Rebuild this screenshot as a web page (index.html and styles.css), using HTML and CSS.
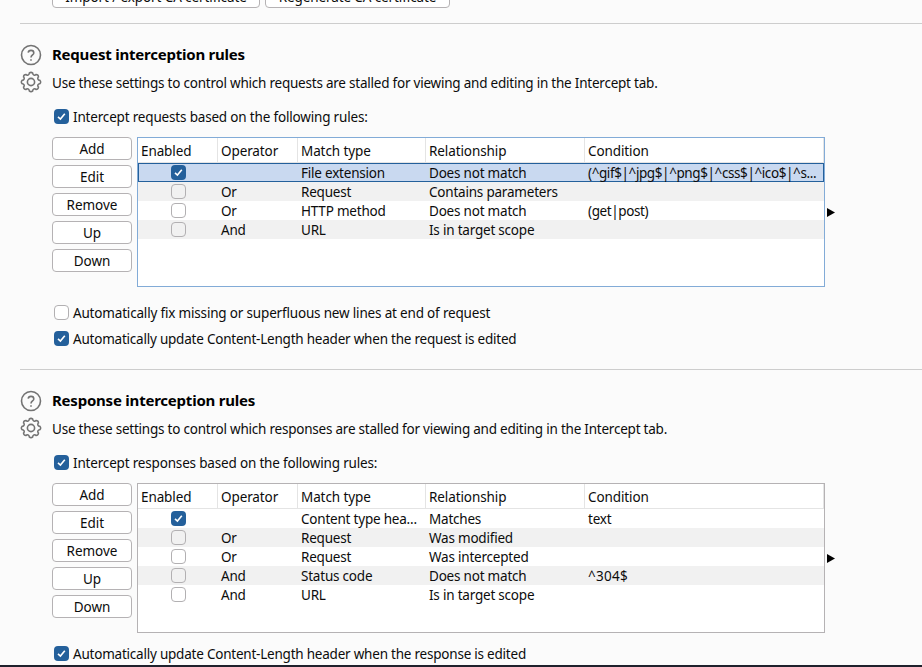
FILE: index.html
```
<!DOCTYPE html>
<html lang="en">
<head>
<meta charset="utf-8">
<title>Proxy settings</title>
<link rel="stylesheet" href="styles.css">
</head>
<body>
<svg class="defs" aria-hidden="true">
  <symbol id="help" viewBox="-11 -11 22 22"><circle r="9.5"/><path d="M-2.8-2.3C-2.5-5.4 2.8-5.4 2.8-2.1 2.8 0 0 0 0 2.6M0 4.3V5.8"/></symbol>
  <symbol id="gear" viewBox="-11 -11 22 22"><circle r="3.6"/><path transform="scale(.93)" d="M-1.9-9.5A2.8 2.8 0 0 1 1.9-9.5A1.95 1.95 0 0 0 5.37-8.06A2.8 2.8 0 0 1 8.06-5.37A1.95 1.95 0 0 0 9.5-1.9A2.8 2.8 0 0 1 9.5 1.9A1.95 1.95 0 0 0 8.06 5.37A2.8 2.8 0 0 1 5.37 8.06A1.95 1.95 0 0 0 1.9 9.5A2.8 2.8 0 0 1-1.9 9.5A1.95 1.95 0 0 0-5.37 8.06A2.8 2.8 0 0 1-8.06 5.37A1.95 1.95 0 0 0-9.5 1.9A2.8 2.8 0 0 1-9.5-1.9A1.95 1.95 0 0 0-8.06-5.37A2.8 2.8 0 0 1-5.37-8.06A1.95 1.95 0 0 0-1.9-9.5Z"/></symbol>
  <symbol id="tick" viewBox="0 0 15 15"><path d="M4 7.8L6.4 10L10.8 4.8"/></symbol>
</svg>
<main>
  <div class="top"><button class="wide">Import / export CA certificate</button><button class="regen">Regenerate CA certificate</button></div>

  <section>
    <div class="head"><svg class="icon"><use href="#help"/></svg><h2>Request interception rules</h2></div>
    <div class="desc"><svg class="icon"><use href="#gear"/></svg><p>Use these settings to control which requests are stalled for viewing and editing in the Intercept tab.</p></div>
    <div class="option first"><i class="box on"><svg><use href="#tick"/></svg></i><span class="loose">Intercept requests based on the following rules:</span></div>
    <div class="rules">
      <div class="buttons"><button>Add</button><button>Edit</button><button>Remove</button><button>Up</button><button>Down</button></div>
      <div class="table focus">
        <div class="row header"><b>Enabled</b><b>Operator</b><b>Match type</b><b>Relationship</b><b>Condition</b></div>
        <div class="row selected"><span><i class="box on"><svg><use href="#tick"/></svg></i></span><span></span><span>File extension</span><span>Does not match</span><span class="cond">(^gif$|^jpg$|^png$|^css$|^ico$|^s...</span></div>
        <div class="row alt"><span><i class="box"></i></span><span>Or</span><span>Request</span><span>Contains parameters</span><span></span></div>
        <div class="row"><span><i class="box"></i></span><span>Or</span><span>HTTP method</span><span>Does not match</span><span class="cond">(get|post)</span></div>
        <div class="row alt"><span><i class="box"></i></span><span>And</span><span>URL</span><span>Is in target scope</span><span></span></div>
      </div>
      <svg class="arrow" viewBox="0 0 8 10"><path d="M0 0L8 4.5L0 9Z"/></svg>
    </div>
    <div class="option second"><i class="box"></i><span class="loose">Automatically fix missing or superfluous new lines at end of request</span></div>
    <div class="option third"><i class="box on"><svg><use href="#tick"/></svg></i><span>Automatically update Content-Length header when the request is edited</span></div>
  </section>

  <section>
    <div class="head"><svg class="icon"><use href="#help"/></svg><h2>Response interception rules</h2></div>
    <div class="desc"><svg class="icon"><use href="#gear"/></svg><p>Use these settings to control which responses are stalled for viewing and editing in the Intercept tab.</p></div>
    <div class="option first"><i class="box on"><svg><use href="#tick"/></svg></i><span class="loose">Intercept responses based on the following rules:</span></div>
    <div class="rules">
      <div class="buttons"><button>Add</button><button>Edit</button><button>Remove</button><button>Up</button><button>Down</button></div>
      <div class="table">
        <div class="row header"><b>Enabled</b><b>Operator</b><b>Match type</b><b>Relationship</b><b>Condition</b></div>
        <div class="row"><span><i class="box on"><svg><use href="#tick"/></svg></i></span><span></span><span>Content type hea...</span><span>Matches</span><span>text</span></div>
        <div class="row alt"><span><i class="box"></i></span><span>Or</span><span>Request</span><span>Was modified</span><span></span></div>
        <div class="row"><span><i class="box"></i></span><span>Or</span><span>Request</span><span>Was intercepted</span><span></span></div>
        <div class="row alt"><span><i class="box"></i></span><span>And</span><span>Status code</span><span>Does not match</span><span class="caret">^304$</span></div>
        <div class="row"><span><i class="box"></i></span><span>And</span><span>URL</span><span>Is in target scope</span><span></span></div>
      </div>
      <svg class="arrow" viewBox="0 0 8 10"><path d="M0 0L8 4.5L0 9Z"/></svg>
    </div>
    <div class="option last"><i class="box on"><svg><use href="#tick"/></svg></i><span>Automatically update Content-Length header when the response is edited</span></div>
  </section>
</main>
<footer></footer>
</body>
</html>
```
FILE: styles.css
```
* { box-sizing: border-box; }
body { margin: 0; height: 667px; overflow: hidden; display: flex; flex-direction: column; background: #fbfbfb; color: #0c0c0c; font: 13.5px/19px "Noto Sans", sans-serif; }
main { height: 665px; overflow: hidden; }
footer { height: 2px; background: #1f212c; }
.defs { display: none; }
.top { height: 23px; padding-left: 52px; display: flex; gap: 5px; align-items: flex-start; }
button { width: 80px; height: 23px; padding: 2px 0 0; border: 1px solid #b5b2b4; border-radius: 4px; background: #fff; color: inherit; font: inherit; line-height: 19px; text-align: center; white-space: nowrap; }
.top button { height: 23px; margin-top: -15px; letter-spacing: -0.1px; }
.top .wide { width: 208px; }
.top .regen { width: 185px; }
section { height: 346px; margin-left: 20px; border-top: 1px solid #cdcdcd; padding-top: 20px; }
.head, .desc { display: flex; gap: 10px; white-space: nowrap; }
.head { height: 27px; }
.desc { height: 40px; }
.icon { width: 22px; height: 22px; flex: none; fill: none; stroke: #737373; stroke-width: 1.6; }
h2 { margin: 0; font-size: 15px; line-height: 20px; letter-spacing: -0.22px; color: #000; }
p { margin: 0; line-height: 24px; letter-spacing: -0.223px; }
.option { display: flex; align-items: center; gap: 4px; height: 19px; padding-left: 34px; white-space: nowrap; }
.option span { margin-top: 2px; letter-spacing: -0.22px; }
.option .loose { letter-spacing: -0.177px; }
.option.first { margin-top: -4px; }
.option.second { margin-top: 16px; }
.option.third { margin-top: 7px; }
.option.last { margin-top: 11px; }
.box { display: block; flex: none; width: 15px; height: 15px; border: 1px solid #b2b0b2; border-radius: 4px; background: #fff; }
.box.on { border: 0; background: #24609b; }
.box svg { display: block; width: 15px; height: 15px; fill: none; stroke: #fff; stroke-width: 1.6; }
.rules { display: flex; margin: 11px 0 0 32px; }
.buttons { display: flex; flex-direction: column; gap: 5px; width: 80px; margin-right: 5px; }
.table { width: 688px; height: 150px; border: 1px solid #b5b2b4; background: #fff; letter-spacing: -0.21px; }
.table.focus { border-color: #82abd7; }
.row { display: grid; grid-template-columns: 80px 80px 128px 159px 239px; height: 19px; white-space: nowrap; }
.row > span { padding-left: 3px; line-height: 20px; }
.row .cond { letter-spacing: -0.4px; }
.row .caret { letter-spacing: 0.3px; }
.row .box { margin: 2px 0 0 30px; }
.header { height: 25px; border-bottom: 1px solid #e4e4e4; letter-spacing: -0.1px; }
.header b { font-weight: 400; height: 24px; padding-left: 3px; line-height: 26px; border-right: 1px solid #e4e4e4; }
.alt { background: #f1f1f1; }
.alt .box { background: #f1f1f1; }
.selected { background: #c9d9f0; box-shadow: inset 0 0 0 1px #24609b; }
.arrow { width: 8px; height: 10px; margin: 71px 0 0 2px; }
```
